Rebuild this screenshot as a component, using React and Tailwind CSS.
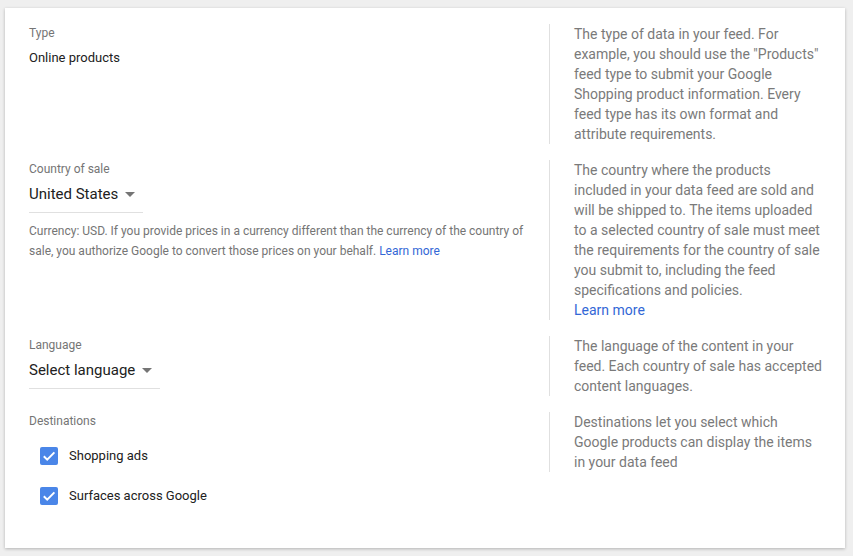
import React from "react";

const font = { fontFamily: "Roboto, 'Noto Sans', Arial, sans-serif" };

function Caret() {
  return (
    <svg width="10" height="5" viewBox="0 0 10 5" className="ml-[7px] mt-[1px]">
      <path d="M0 0 L10 0 L5 5 Z" fill="#757575" />
    </svg>
  );
}

function Select({ value }) {
  return (
    <div className="inline-flex items-center h-[37px] border-b border-[#e0e0e0] pr-[8px]">
      <span className="text-[15px] leading-[20px] text-[#212121]">{value}</span>
      <Caret />
    </div>
  );
}

function Check({ label }) {
  return (
    <div className="flex items-center h-[40px] pl-[11px]">
      <div className="w-[18px] h-[18px] rounded-[2px] bg-[#4a86e8] flex items-center justify-center">
        <svg width="18" height="18" viewBox="0 0 18 18">
          <path d="M3.8 9.2 L7.2 12.6 L14.4 5.4" stroke="#fff" strokeWidth="2" fill="none" />
        </svg>
      </div>
      <span className="ml-[11px] text-[13px] leading-[20px] text-[#212121]">{label}</span>
    </div>
  );
}

function Help({ children }) {
  return (
    <div className="self-start border-l border-[#e0e0e0] pl-[24px] text-[14px] leading-[20px] text-[#7a7a7a]">
      {children}
    </div>
  );
}

function Label({ children }) {
  return <div className="text-[12px] leading-[17px] pt-[1px] text-[#757575]">{children}</div>;
}

export default function App() {
  return (
    <div className="w-[853px] h-[556px] bg-[#efefef] pt-[8px] pl-[5px]" style={font}>
      <div className="w-[840px] h-[540px] bg-white shadow-[0_1px_3px_rgba(0,0,0,0.25)] pt-[16px] pl-[24px] pr-[23px]">
        <div className="grid grid-cols-[1fr_273px] mb-[16px]">
          <div>
            <Label>Type</Label>
            <div className="mt-[6px] text-[13px] leading-[20px] text-[#212121]">Online products</div>
          </div>
          <Help>
            The type of data in your feed. For example, you should use the "Products" feed type to submit your Google Shopping product information. Every feed type has its own format and attribute requirements.
          </Help>
        </div>

        <div className="grid grid-cols-[1fr_273px] mb-[16px]">
          <div className="pr-[19px]">
            <Label>Country of sale</Label>
            <div className="-mt-[2px]">
              <Select value="United States" />
            </div>
            <div className="mt-[8px] text-[12px] leading-[20px] text-[#757575]">
              Currency: USD. If you provide prices in a currency different than the currency of the country of sale, you authorize Google to convert those prices on your behalf.{" "}
              <span className="text-[#3367d6]">Learn more</span>
            </div>
          </div>
          <Help>
            The country where the products included in your data feed are sold and will be shipped to. The items uploaded to a selected country of sale must meet the requirements for the country of sale you submit to, including the feed specifications and policies.
            <div className="text-[#3367d6]">Learn more</div>
          </Help>
        </div>

        <div className="grid grid-cols-[1fr_273px] mb-[16px]">
          <div>
            <Label>Language</Label>
            <div className="-mt-[2px]">
              <Select value="Select language" />
            </div>
          </div>
          <Help>
            The language of the content in your feed. Each country of sale has accepted content languages.
          </Help>
        </div>

        <div className="grid grid-cols-[1fr_273px]">
          <div>
            <Label>Destinations</Label>
            <div className="mt-[6px]">
              <Check label="Shopping ads" />
              <Check label="Surfaces across Google" />
            </div>
          </div>
          <Help>
            Destinations let you select which Google products can display the items in your data feed
          </Help>
        </div>
      </div>
    </div>
  );
}
